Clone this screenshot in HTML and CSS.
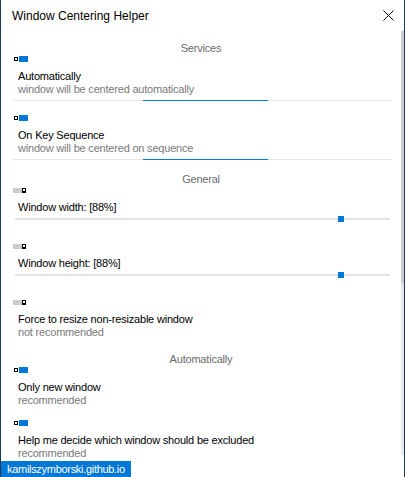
FILE: index.html
```html
<!DOCTYPE html>
<html>
<head>
<meta charset="utf-8">
<link rel="stylesheet" href="styles.css">
</head>
<body>
<div class="window">
  <div class="titlebar">
    <span class="title">Window Centering Helper</span>
    <svg class="close" width="11" height="11" viewBox="0 0 11 11"><path d="M0.5 0.5 L10.5 10.5 M10.5 0.5 L0.5 10.5" stroke="#000" stroke-width="1" fill="none"/></svg>
  </div>
  <div class="body">
    <div class="main">
      <div class="header first">Services</div>
      <div class="item">
        <div class="toggle on"><span class="knob"></span><span class="bar"></span></div>
        <div class="label">Automatically</div>
        <div class="sub">window will be centered automatically</div>
        <div class="line"><span class="accent"></span></div>
      </div>
      <div class="item gap14">
        <div class="toggle on"><span class="knob"></span><span class="bar"></span></div>
        <div class="label">On Key Sequence</div>
        <div class="sub">window will be centered on sequence</div>
        <div class="line"><span class="accent"></span></div>
      </div>
      <div class="header gap11">General</div>
      <div class="item">
        <div class="toggle off"><span class="bar"></span><span class="knob"></span></div>
        <div class="label">Window width: [88%]</div>
        <div class="slider"><span class="track"></span><span class="thumb"></span></div>
      </div>
      <div class="item gap21">
        <div class="toggle off"><span class="bar"></span><span class="knob"></span></div>
        <div class="label">Window height: [88%]</div>
        <div class="slider"><span class="track"></span><span class="thumb"></span></div>
      </div>
      <div class="item gap21">
        <div class="toggle off"><span class="bar"></span><span class="knob"></span></div>
        <div class="label">Force to resize non-resizable window</div>
        <div class="sub">not recommended</div>
      </div>
      <div class="header gap12">Automatically</div>
      <div class="item">
        <div class="toggle on"><span class="knob"></span><span class="bar"></span></div>
        <div class="label">Only new window</div>
        <div class="sub">recommended</div>
      </div>
      <div class="item gap13">
        <div class="toggle on"><span class="knob"></span><span class="bar"></span></div>
        <div class="label">Help me decide which window should be excluded</div>
        <div class="sub">recommended</div>
      </div>
    </div>
    <div class="scrollbar"><div class="thumbbar"></div><div class="rest"></div></div>
  </div>
  <div class="footer">kamilszymborski.github.io</div>
</div>
</body>
</html>
```
FILE: styles.css
```css
html, body {
  margin: 0;
  padding: 0;
  background: #ffffff;
}
body {
  width: 405px;
  height: 477px;
  overflow: hidden;
  font-family: "Liberation Sans", Arial, sans-serif;
}
.window {
  position: relative;
  width: 405px;
  height: 477px;
  box-sizing: border-box;
  border-left: 1px solid #1f3a50;
  border-right: 1px solid #1f3a50;
  background: #fff;
  overflow: hidden;
}
.titlebar {
  height: 31px;
  box-sizing: border-box;
  padding-top: 8px;
  padding-left: 11px;
  position: relative;
}
.title {
  font-size: 12px;
  line-height: 16px;
  color: #000;
  display: block;
}
.close {
  position: absolute;
  left: 382px;
  top: 10px;
}
.body {
  display: flex;
  height: 446px;
}
.main {
  flex: 1;
  font-size: 11px;
  letter-spacing: -0.2px;
  padding-top: 9px;
}
.scrollbar {
  width: 3px;
  display: flex;
  flex-direction: column;
}
.thumbbar {
  height: 252px;
  background: #cdcdcd;
}
.rest {
  height: 172px;
  background: #e8e8e8;
}
.header {
  line-height: 16px;
  height: 16px;
  text-align: center;
  color: #6b6b6b;
}
.gap11 { margin-top: 11px; }
.gap12 { margin-top: 12px; }
.gap13 { margin-top: 13px; }
.gap14 { margin-top: 14px; }
.gap21 { margin-top: 21px; }
.toggle {
  height: 6px;
  display: flex;
  align-items: center;
}
.toggle.on {
  margin-left: 13px;
}
.toggle.on .knob {
  width: 4px;
  height: 4px;
  box-sizing: border-box;
  border: 1px solid #000;
  background: #fff;
  margin-right: 1px;
}
.toggle.on .bar {
  width: 9px;
  height: 6px;
  background: #0078d7;
}
.toggle.off {
  margin-left: 12px;
}
.toggle.off .bar {
  width: 9px;
  height: 5px;
  background: #cccccc;
}
.toggle.off .knob {
  width: 4px;
  height: 5px;
  box-sizing: border-box;
  border: 1px solid #000;
  border-bottom-width: 2px;
  background: #fff;
}
.label {
  margin-top: 8px;
  padding-left: 17px;
  line-height: 13px;
  height: 13px;
  color: #000;
  white-space: nowrap;
}
.sub {
  padding-left: 17px;
  line-height: 13px;
  height: 13px;
  color: #7a7a7a;
  white-space: nowrap;
}
.line {
  margin-top: 4px;
  margin-left: 12px;
  width: 378px;
  height: 1px;
  background: #e6e6e6;
  position: relative;
}
.accent {
  position: absolute;
  left: 130px;
  top: 0;
  width: 125px;
  height: 1px;
  background: #0078d7;
}
.slider {
  margin-top: 2px;
  margin-left: 14px;
  width: 375px;
  height: 6px;
  position: relative;
}
.track {
  position: absolute;
  left: 0;
  right: 0;
  top: 2px;
  height: 2px;
  background: #e3e3e3;
}
.thumb {
  position: absolute;
  left: 323px;
  top: 0;
  width: 6px;
  height: 6px;
  background: #0078d7;
}
.footer {
  position: absolute;
  left: -1px;
  bottom: 0;
  width: 131px;
  height: 16px;
  box-sizing: border-box;
  background: #0078d7;
  color: #fff;
  font-size: 11px;
  letter-spacing: -0.3px;
  line-height: 14px;
  padding-top: 1px;
  padding-left: 7px;
  white-space: nowrap;
}
```
